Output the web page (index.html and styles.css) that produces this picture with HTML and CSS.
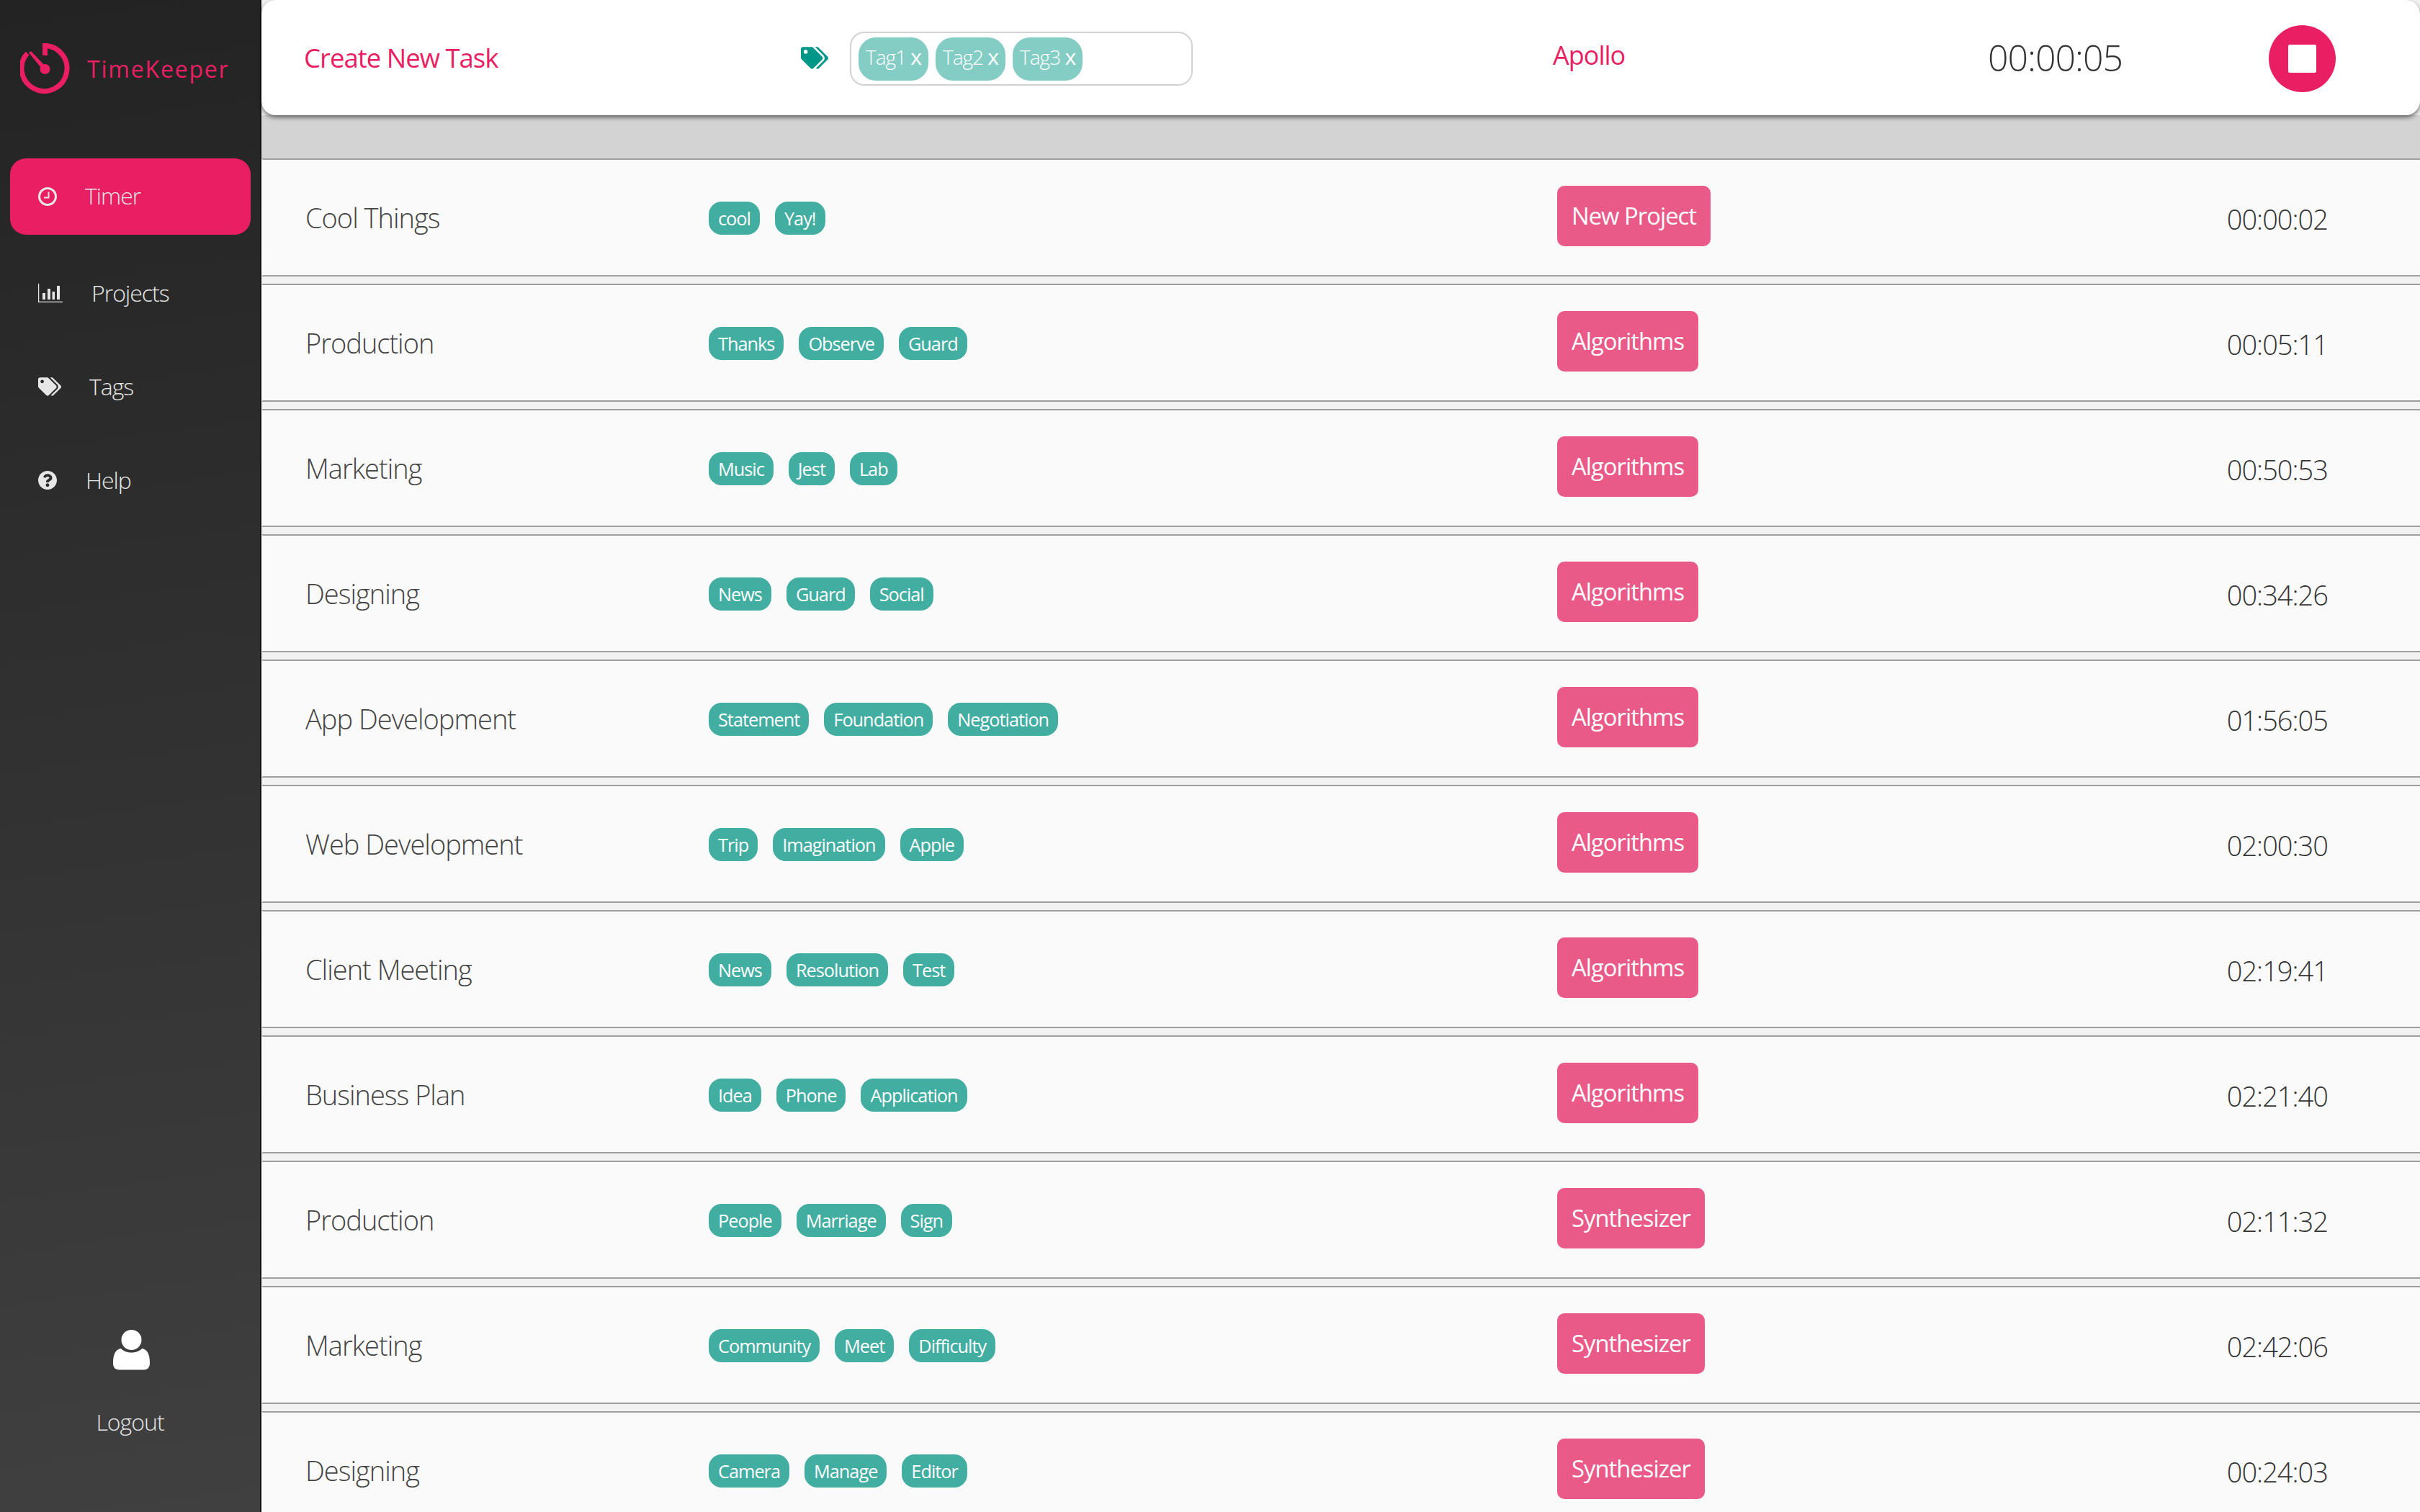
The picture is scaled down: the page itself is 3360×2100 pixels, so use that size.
FILE: index.html
```html
<!DOCTYPE html>
<html>
<head>
  <meta charset="UTF-8">
  <title>TimeKeeper</title>
  <link rel="stylesheet" href="styles.css">
</head>
<body>
<div class="app">
  <aside class="sidebar">
    <div class="logo">
      <svg class="logo-icon" viewBox="0 0 70 70">
        <path d="M34 3.5A31.5 31.5 0 1 1 10 14" fill="none" stroke="#e91e63" stroke-width="7"/>
        <rect x="31" y="0" width="7" height="17" fill="#e91e63"/>
        <path d="M12 13L15 11L37 34L32 38Z" fill="#e91e63"/>
        <circle cx="34.500" cy="36" r="7" fill="#e91e63"/>
      </svg>
      <span class="logo-text">TimeKeeper</span>
    </div>
    <nav class="nav">
      <a class="nav-item active">
        <svg class="nav-icon icon-clock" viewBox="0 0 26 26">
          <circle cx="13" cy="13" r="11.500" fill="none" stroke="#e6e6e6" stroke-width="3"/>
          <path d="M14.500 6.500V14.500H8" fill="none" stroke="#e6e6e6" stroke-width="2"/>
        </svg>
        <span class="label-timer">Timer</span>
      </a>
      <a class="nav-item">
        <svg class="nav-icon icon-chart" viewBox="0 0 34 26">
          <path d="M.5 0V25.500H34" fill="none" stroke="#e6e6e6" stroke-width="1.500"/>
          <rect x="6" y="13" width="4" height="9" fill="#e6e6e6"/>
          <rect x="13" y="7" width="4" height="15" fill="#e6e6e6"/>
          <rect x="19.500" y="11" width="3.500" height="11" fill="#e6e6e6"/>
          <rect x="26" y="3" width="4" height="19" fill="#e6e6e6"/>
        </svg>
        <span class="label-projects">Projects</span>
      </a>
      <a class="nav-item">
        <svg class="nav-icon icon-tags" viewBox="0 0 640 512">
          <path fill="#e6e6e6" d="M497.941 225.941L286.059 14.059A48 48 0 0 0 252.118 0H48C21.49 0 0 21.49 0 48v204.118a48 48 0 0 0 14.059 33.941l211.882 211.882c18.744 18.745 49.136 18.746 67.882 0l204.118-204.118c18.745-18.745 18.745-49.137 0-67.882zM112 160c-26.51 0-48-21.49-48-48s21.49-48 48-48 48 21.49 48 48-21.49 48-48 48zm513.941 133.823L421.823 497.941c-18.745 18.745-49.137 18.745-67.882 0l-.36-.36L527.64 323.522c16.999-16.999 26.36-39.6 26.36-63.64s-9.362-46.641-26.36-63.64L331.397 0h48.721a48 48 0 0 1 33.941 14.059l211.882 211.882c18.745 18.745 18.745 49.137 0 67.882z"/>
        </svg>
        <span class="label-tags">Tags</span>
      </a>
      <a class="nav-item">
        <svg class="nav-icon icon-help" viewBox="8 8 496 496">
          <path fill="#e6e6e6" d="M504 256c0 136.997-111.043 248-248 248S8 392.997 8 256C8 119.083 119.043 8 256 8s248 111.083 248 248zM262.655 90c-54.497 0-89.255 22.957-116.549 63.758-3.536 5.286-2.353 12.415 2.715 16.258l34.699 26.31c5.205 3.947 12.621 3.008 16.665-2.122 17.864-22.658 30.113-35.797 57.303-35.797 20.429 0 45.698 13.148 45.698 32.958 0 14.976-12.363 22.667-32.534 33.976C247.128 238.528 216 254.941 216 296v4c0 6.627 5.373 12 12 12h56c6.627 0 12-5.373 12-12v-1.333c0-28.462 83.186-29.647 83.186-106.667 0-58.002-60.165-102-116.531-102zM256 338c-25.365 0-46 20.635-46 46 0 25.364 20.635 46 46 46s46-20.636 46-46c0-25.365-20.635-46-46-46z"/>
        </svg>
        <span class="label-help">Help</span>
      </a>
    </nav>
    <div class="logout">
      <svg class="user-icon" viewBox="0 0 51 56">
        <circle cx="25.500" cy="14" r="14" fill="#fff"/>
        <path d="M11 26C15 30 20 31.500 25.500 31.500S36 30 40 26C47 27 51 33 51 46C51 52 48 55.500 43 55.500H8C3 55.500 0 52 0 46C0 33 4 27 11 26Z" fill="#fff"/>
      </svg>
      <span>Logout</span>
    </div>
  </aside>

  <main class="main">
    <header class="topbar">
      <div class="new-task">Create New Task</div>
      <svg class="tag-icon" viewBox="0 0 640 512">
        <path fill="#009688" d="M497.941 225.941L286.059 14.059A48 48 0 0 0 252.118 0H48C21.49 0 0 21.49 0 48v204.118a48 48 0 0 0 14.059 33.941l211.882 211.882c18.744 18.745 49.136 18.746 67.882 0l204.118-204.118c18.745-18.745 18.745-49.137 0-67.882zM112 160c-26.51 0-48-21.49-48-48s21.49-48 48-48 48 21.49 48 48-21.49 48-48 48zm513.941 133.823L421.823 497.941c-18.745 18.745-49.137 18.745-67.882 0l-.36-.36L527.64 323.522c16.999-16.999 26.36-39.6 26.36-63.64s-9.362-46.641-26.36-63.64L331.397 0h48.721a48 48 0 0 1 33.941 14.059l211.882 211.882c18.745 18.745 18.745 49.137 0 67.882z"/>
      </svg>
      <div class="tag-input">
        <span class="chip">Tag1 <i>x</i></span>
        <span class="chip">Tag2 <i>x</i></span>
        <span class="chip">Tag3 <i>x</i></span>
      </div>
      <div class="current-project">Apollo</div>
      <div class="current-time">00:00:05</div>
      <button class="stop-btn"><span class="stop-square"></span></button>
    </header>

    <section class="rows">
      <div class="row">
        <div class="row-name">Cool Things</div>
        <div class="row-tags"><span class="tag">cool</span><span class="tag">Yay!</span></div>
        <div class="row-project"><span class="project">New Project</span></div>
        <div class="row-time">00:00:02</div>
      </div>
      <div class="row">
        <div class="row-name">Production</div>
        <div class="row-tags"><span class="tag">Thanks</span><span class="tag">Observe</span><span class="tag">Guard</span></div>
        <div class="row-project"><span class="project">Algorithms</span></div>
        <div class="row-time">00:05:11</div>
      </div>
      <div class="row">
        <div class="row-name">Marketing</div>
        <div class="row-tags"><span class="tag">Music</span><span class="tag">Jest</span><span class="tag">Lab</span></div>
        <div class="row-project"><span class="project">Algorithms</span></div>
        <div class="row-time">00:50:53</div>
      </div>
      <div class="row">
        <div class="row-name">Designing</div>
        <div class="row-tags"><span class="tag">News</span><span class="tag">Guard</span><span class="tag">Social</span></div>
        <div class="row-project"><span class="project">Algorithms</span></div>
        <div class="row-time">00:34:26</div>
      </div>
      <div class="row">
        <div class="row-name">App Development</div>
        <div class="row-tags"><span class="tag">Statement</span><span class="tag">Foundation</span><span class="tag">Negotiation</span></div>
        <div class="row-project"><span class="project">Algorithms</span></div>
        <div class="row-time">01:56:05</div>
      </div>
      <div class="row">
        <div class="row-name">Web Development</div>
        <div class="row-tags"><span class="tag">Trip</span><span class="tag">Imagination</span><span class="tag">Apple</span></div>
        <div class="row-project"><span class="project">Algorithms</span></div>
        <div class="row-time">02:00:30</div>
      </div>
      <div class="row">
        <div class="row-name">Client Meeting</div>
        <div class="row-tags"><span class="tag">News</span><span class="tag">Resolution</span><span class="tag">Test</span></div>
        <div class="row-project"><span class="project">Algorithms</span></div>
        <div class="row-time">02:19:41</div>
      </div>
      <div class="row">
        <div class="row-name">Business Plan</div>
        <div class="row-tags"><span class="tag">Idea</span><span class="tag">Phone</span><span class="tag">Application</span></div>
        <div class="row-project"><span class="project">Algorithms</span></div>
        <div class="row-time">02:21:40</div>
      </div>
      <div class="row">
        <div class="row-name">Production</div>
        <div class="row-tags"><span class="tag">People</span><span class="tag">Marriage</span><span class="tag">Sign</span></div>
        <div class="row-project"><span class="project">Synthesizer</span></div>
        <div class="row-time">02:11:32</div>
      </div>
      <div class="row">
        <div class="row-name">Marketing</div>
        <div class="row-tags"><span class="tag">Community</span><span class="tag">Meet</span><span class="tag">Difficulty</span></div>
        <div class="row-project"><span class="project">Synthesizer</span></div>
        <div class="row-time">02:42:06</div>
      </div>
      <div class="row">
        <div class="row-name">Designing</div>
        <div class="row-tags"><span class="tag">Camera</span><span class="tag">Manage</span><span class="tag">Editor</span></div>
        <div class="row-project"><span class="project">Synthesizer</span></div>
        <div class="row-time">00:24:03</div>
      </div>
    </section>
  </main>
</div>
</body>
</html>
```
FILE: styles.css
```css
* { box-sizing: border-box; }

html, body {
  margin: 0;
  height: 100%;
  overflow: hidden;
}

body {
  font-family: "Open Sans", "Liberation Sans", sans-serif;
  letter-spacing: -1px;
  background: #f2f2f2;
}

.app {
  display: flex;
  height: 2100px;
}

/* sidebar */
.sidebar {
  width: 363px;
  flex: none;
  display: flex;
  flex-direction: column;
  border-right: 2px solid #111;
  background: linear-gradient(172deg, #232323 0%, #404040 100%);
  color: #e6e6e6;
}

.logo {
  display: flex;
  align-items: center;
  height: 220px;
  padding: 0 0 30px 28px;
}
.logo-icon { width: 70px; height: 70px; }
.logo-text {
  margin-left: 23px;
  font-size: 32px;
  letter-spacing: 1.800px;
  color: #e91e63;
}

.nav {
  display: flex;
  flex-direction: column;
  gap: 24px;
  padding: 0 13px 0 14px;
}
.nav-item {
  display: flex;
  align-items: center;
  height: 106px;
  padding-left: 39px;
  border-radius: 22px;
  font-size: 32px;
  font-weight: 350;
}
.nav-item.active {
  margin-bottom: 4px;
  background: #e91e63;
}
.nav-item span { margin-bottom: 2px; }
.nav-icon { flex: none; }
.icon-clock { width: 26px; height: 26px; margin-right: 39px; }
.icon-chart { width: 34px; height: 26px; margin-right: 40px; }
.icon-tags { width: 32px; height: 26px; margin-right: 39px; }
.icon-help { width: 26px; height: 26px; margin-right: 40px; }
.nav-item .label-timer { margin-bottom: 4px; }

.logout {
  margin-top: auto;
  margin-bottom: 104px;
  display: flex;
  flex-direction: column;
  align-items: center;
  font-size: 32px;
  font-weight: 350;
}
.user-icon { width: 51px; height: 56px; margin-bottom: 50px; margin-left: 4px; }

/* main */
.main {
  flex: 1;
  min-width: 0;
  background: #f2f2f2;
}

.topbar {
  position: relative;
  z-index: 1;
  display: flex;
  align-items: center;
  height: 160px;
  padding-left: 59px;
  border-radius: 20px;
  background: #fff;
  box-shadow: 0 3px 6px rgba(0, 0, 0, .55);
}
.new-task {
  width: 690px;
  font-size: 36.500px;
  font-weight: 400;
  color: #e91e63;
}
.tag-icon { width: 38px; height: 31px; margin-right: 30px; }
.tag-input {
  display: flex;
  gap: 10px;
  width: 476px;
  height: 75px;
  margin-top: 3px;
  padding: 6px 10px;
  border: 2px solid #d2d2d2;
  border-radius: 20px;
}
.chip {
  height: 60px;
  padding: 0 10px;
  border-radius: 24px;
  background: #84cdc5;
  color: #fff;
  font-size: 28px;
  font-weight: 300;
  line-height: 54px;
  white-space: nowrap;
}
.chip i { font-style: normal; font-size: 30px; font-weight: 400; }
.current-project {
  width: 604px;
  margin-left: 500px;
  margin-bottom: 8px;
  font-size: 36px;
  color: #e91e63;
}
.current-time {
  width: 390px;
  font-size: 50px;
  font-weight: 300;
  color: #333;
}
.stop-btn {
  width: 93px;
  height: 93px;
  display: flex;
  align-items: center;
  justify-content: center;
  margin-top: 3px;
  padding: 0;
  border: 0;
  border-radius: 50%;
  background: #e91e63;
}
.stop-square {
  width: 39px;
  height: 39px;
  border-radius: 2px;
  background: #fff;
}

.rows {
  padding-top: 60px;
  background: linear-gradient(#d3d3d3 60px, #f2f2f2 60px);
}
.row {
  display: grid;
  grid-template-columns: 560px 1178px 1fr auto;
  align-items: center;
  height: 164px;
  margin-bottom: 10px;
  padding: 0 128px 0 59px;
  border-top: 2px solid #9e9e9e;
  border-bottom: 2px solid #9e9e9e;
  border-left: 2px solid #fff;
  background: #fafafa;
}
.row-name {
  font-size: 38px;
  font-weight: 330;
  color: #444;
}
.row-tags {
  display: flex;
  gap: 21px;
  margin-top: 2px;
}
.tag {
  height: 46px;
  padding: 0 13px;
  border-radius: 18px;
  background: #42ada1;
  color: #fff;
  font-size: 25.300px;
  font-weight: 400;
  line-height: 46px;
  white-space: nowrap;
}
.row-project {
  display: flex;
  margin-bottom: 4px;
}
.project {
  height: 84px;
  padding: 0 20px;
  border-radius: 10px;
  background: #ea5a89;
  color: #fff;
  font-size: 32.800px;
  line-height: 84px;
}
.row-time {
  margin-top: 3px;
  font-size: 38px;
  font-weight: 300;
  color: #333;
}
```
